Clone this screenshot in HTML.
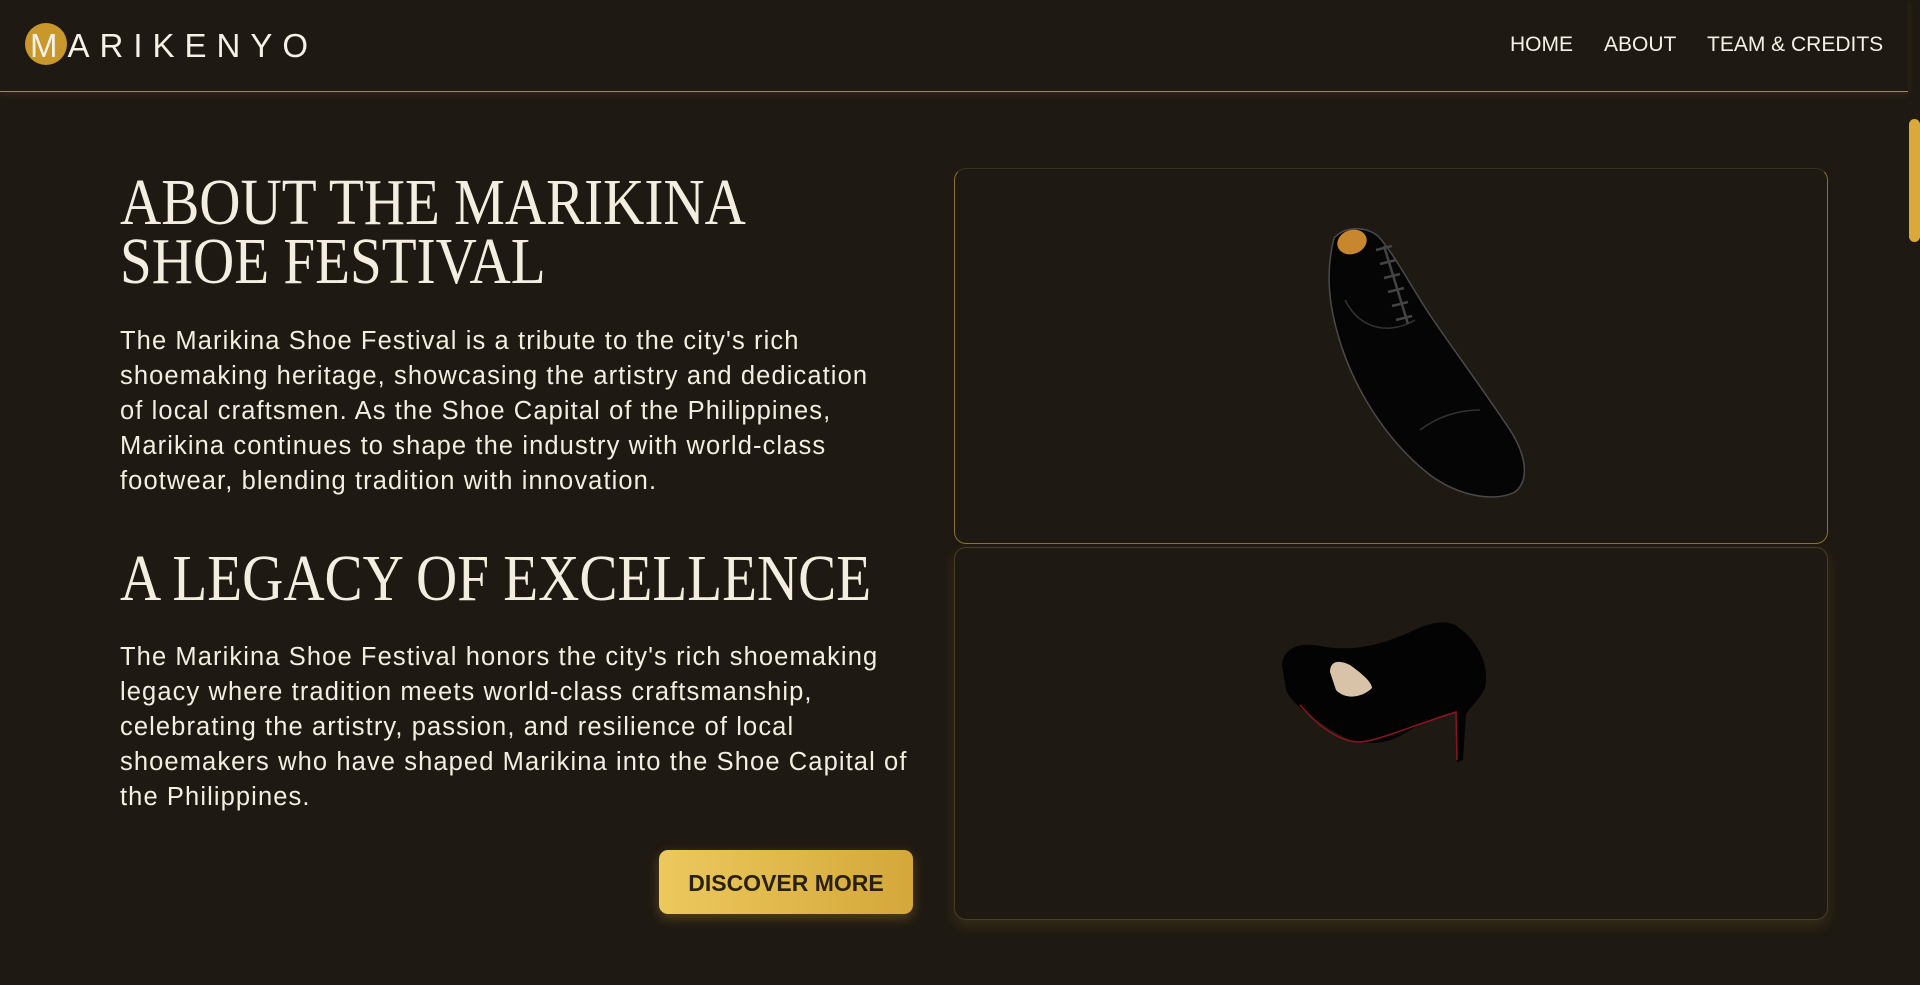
<!DOCTYPE html>
<html><head><meta charset="utf-8">
<style>
*{margin:0;padding:0;box-sizing:border-box}
html,body{width:1920px;height:985px;overflow:hidden;background:#1e1912;font-family:"Liberation Sans",sans-serif;color:#f3eee0}
.nav{position:absolute;left:0;top:0;width:1908px;height:92px;border-bottom:1px solid #a88a3e;box-shadow:0 2px 8px rgba(180,140,50,.15)}
.logo{position:absolute;left:25px;top:23px;width:42px;height:42px;border-radius:50%;background:#c9972c}
.logotext{position:absolute;left:30px;top:24px;font-size:33px;letter-spacing:10px;color:#f5f1e6;line-height:44px}
.links{position:absolute;top:33px;font-size:21px;color:#f5f1e6}
.thumb{position:absolute;left:1909px;top:119px;width:11px;height:123px;border-radius:6px;background:#d9a93a}
.h{position:absolute;left:120px;font-family:"Liberation Serif",serif;font-size:66px;line-height:59px;color:#f3eee0;transform:scaleX(.865);transform-origin:left top;white-space:nowrap}
.p{position:absolute;left:120px;font-size:25.5px;letter-spacing:1.1px;line-height:35px;white-space:nowrap;color:#f3eee0}
.btn{position:absolute;left:659px;top:850px;width:254px;height:64px;border-radius:9px;background:linear-gradient(90deg,#ecc95d,#d4a73a);color:#2a2112;font-size:23px;font-weight:bold;text-align:center;line-height:66px;box-shadow:0 4px 12px rgba(220,170,60,.3)}
.card{position:absolute;left:954px;width:874px;border-radius:12px;background:#1e1912}
</style></head><body>
<div class="nav">
<div class="logo"></div>
<div class="logotext">MARIKENYO</div>
<div class="links" style="left:1510px">HOME</div>
<div class="links" style="left:1604px">ABOUT</div>
<div class="links" style="left:1707px">TEAM &amp; CREDITS</div>
</div>
<div class="thumb"></div>

<div class="h" style="top:173px">ABOUT THE MARIKINA<br>SHOE FESTIVAL</div>
<div class="p" style="top:324px">The Marikina Shoe Festival is a tribute to the city's rich<br>shoemaking heritage, showcasing the artistry and dedication<br>of local craftsmen. As the Shoe Capital of the Philippines,<br>Marikina continues to shape the industry with world-class<br>footwear, blending tradition with innovation.</div>
<div class="h" style="top:549px">A LEGACY OF EXCELLENCE</div>
<div class="p" style="top:640px">The Marikina Shoe Festival honors the city's rich shoemaking<br>legacy where tradition meets world-class craftsmanship,<br>celebrating the artistry, passion, and resilience of local<br>shoemakers who have shaped Marikina into the Shoe Capital of<br>the Philippines.</div>
<div class="btn">DISCOVER MORE</div>

<div class="card" style="top:168px;height:376px;border:1px solid #8a7236;border-top-color:#3a3020"></div>
<div class="card" style="top:547px;height:373px;border:1px solid #4a3d22;box-shadow:0 6px 14px rgba(200,160,60,.15);background:radial-gradient(ellipse 120px 180px at 1640px 250px,#262014,#1e1912)"></div>

<svg style="position:absolute;left:0;top:0" width="1920" height="985">
<path d="M1334,238 C1326,270 1328,300 1338,335 C1352,385 1385,440 1430,475 C1460,497 1495,502 1515,492 C1530,480 1526,455 1510,430 C1480,385 1450,345 1430,315 C1410,285 1395,255 1378,236 C1365,226 1345,226 1334,238 Z" fill="#050505" stroke="#4a4a4a" stroke-width="1.5"/>
<path d="M1345,300 C1360,330 1390,335 1415,320" fill="none" stroke="#333" stroke-width="1.5"/>
<path d="M1420,430 C1440,415 1460,410 1480,410" fill="none" stroke="#333" stroke-width="1.5"/>
<ellipse cx="1352" cy="242" rx="15" ry="12" fill="#c8862e" transform="rotate(-20 1352 242)"/>
<g stroke="#444" stroke-width="2.5">
<line x1="1376" y1="250" x2="1392" y2="246"/><line x1="1380" y1="264" x2="1396" y2="260"/><line x1="1384" y1="278" x2="1400" y2="274"/><line x1="1388" y1="292" x2="1404" y2="288"/><line x1="1392" y1="306" x2="1408" y2="302"/><line x1="1396" y1="320" x2="1412" y2="316"/>
<line x1="1384" y1="246" x2="1408" y2="324"/>
</g>
<path d="M1282,665 C1283,648 1300,642 1320,646 C1350,652 1380,646 1410,632 C1430,622 1445,620 1455,625 C1478,640 1490,665 1485,688 C1478,702 1470,707 1466,714 L1463,760 L1457,762 L1456,712 C1440,714 1420,724 1400,736 C1385,744 1365,745 1350,740 C1320,725 1292,705 1286,690 Z" fill="#030303"/>
<path d="M1300,705 C1320,728 1340,742 1360,742 C1380,740 1400,730 1456,712 L1457,760" fill="none" stroke="#8a1520" stroke-width="1.5"/>
<path d="M1330,672 C1330,660 1340,660 1350,665 C1360,672 1372,682 1372,688 C1362,698 1345,700 1336,690 Z" fill="#d9c3a8"/>
</svg>
</body></html>
